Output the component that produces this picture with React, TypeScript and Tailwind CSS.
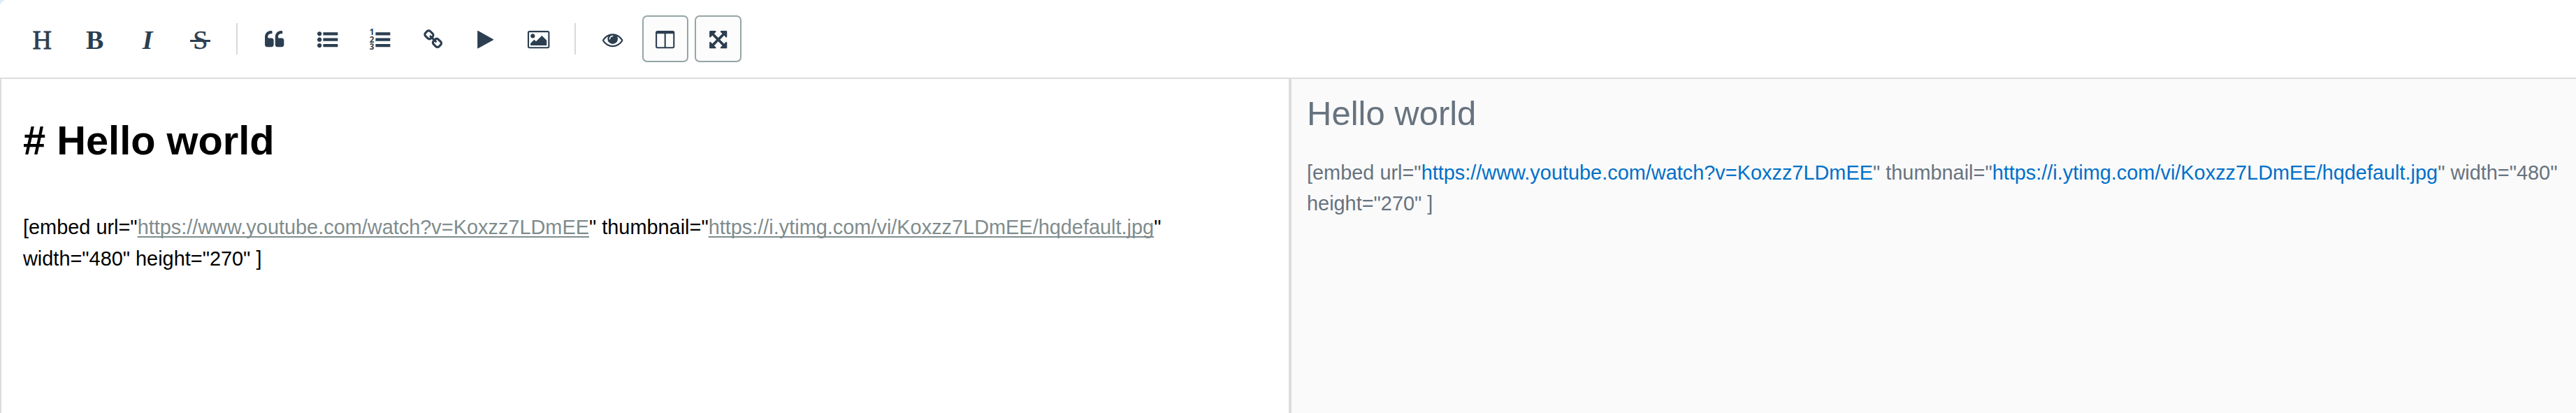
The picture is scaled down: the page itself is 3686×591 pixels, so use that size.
import type { ReactNode } from "react";

const paths = {
    quote: "M832 960v384q0 80-56 136t-136 56h-384q-80 0-136-56t-56-136v-704q0-104 40.5-198.5t109.5-163.5 163.5-109.5 198.5-40.5h64q26 0 45 19t19 45v128q0 26-19 45t-45 19h-64q-106 0-181 75t-75 181v32q0 40 28 68t68 28h224q80 0 136 56t56 136zm896 0v384q0 80-56 136t-136 56h-384q-80 0-136-56t-56-136v-704q0-104 40.5-198.5t109.5-163.5 163.5-109.5 198.5-40.5h64q26 0 45 19t19 45v128q0 26-19 45t-45 19h-64q-106 0-181 75t-75 181v32q0 40 28 68t68 28h224q80 0 136 56t56 136z",
    list: "M384 1408q0 80-56 136t-136 56-136-56-56-136 56-136 136-56 136 56 56 136zm0-512q0 80-56 136t-136 56-136-56-56-136 56-136 136-56 136 56 56 136zm1408 416v192q0 13-9.5 22.5t-22.5 9.5h-1216q-13 0-22.5-9.5t-9.5-22.5v-192q0-13 9.5-22.5t22.5-9.5h1216q13 0 22.5 9.5t9.5 22.5zm-1408-928q0 80-56 136t-136 56-136-56-56-136 56-136 136-56 136 56 56 136zm1408 416v192q0 13-9.5 22.5t-22.5 9.5h-1216q-13 0-22.5-9.5t-9.5-22.5v-192q0-13 9.5-22.5t22.5-9.5h1216q13 0 22.5 9.5t9.5 22.5zm0-512v192q0 13-9.5 22.5t-22.5 9.5h-1216q-13 0-22.5-9.5t-9.5-22.5v-192q0-13 9.5-22.5t22.5-9.5h1216q13 0 22.5 9.5t9.5 22.5z",
    link: "M1520 1216q0-40-28-68l-208-208q-28-28-68-28-42 0-72 32 3 3 19 18.5t21.5 21.5 15 19 13 25.5 3.5 27.5q0 40-28 68t-68 28q-15 0-27.5-3.5t-25.5-13-19-15-21.5-21.5-18.5-19q-33 31-33 73 0 40 28 68l206 207q27 27 68 27 40 0 68-26l147-146q28-28 28-67zm-703-705q0-40-28-68l-206-207q-28-28-68-28-39 0-68 27l-147 146q-28 28-28 67 0 40 28 68l208 208q27 27 68 27 42 0 72-31-3-3-19-18.5t-21.5-21.5-15-19-13-25.5-3.5-27.5q0-40 28-68t68-28q15 0 27.5 3.5t25.5 13 19 15 21.5 21.5 18.5 19q33-31 33-73zm895 705q0 120-85 203l-147 146q-83 83-203 83-121 0-204-85l-206-207q-83-83-83-203 0-123 88-209l-88-88q-86 88-208 88-120 0-204-84l-208-208q-84-84-84-204t85-203l147-146q83-83 203-83 121 0 204 85l206 207q83 83 83 203 0 123-88 209l88 88q86-88 208-88 120 0 204 84l208 208q84 84 84 204z",
    play: "M1576 927l-1328 738q-23 13-39.5 3t-16.5-36v-1472q0-26 16.5-36t39.5 3l1328 738q23 13 23 31t-23 31z",
    image: "M576 576q0 80-56 136t-136 56-136-56-56-136 56-136 136-56 136 56 56 136zm1024 384v448h-1408v-192l320-320 160 160 512-512zm96-704h-1600q-13 0-22.5 9.5t-9.5 22.5v1216q0 13 9.5 22.5t22.5 9.5h1600q13 0 22.5-9.5t9.5-22.5v-1216q0-13-9.5-22.5t-22.5-9.5zm160 32v1216q0 66-47 113t-113 47h-1600q-66 0-113-47t-47-113v-1216q0-66 47-113t113-47h1600q66 0 113 47t47 113z",
    eye: "M1664 960q-152-236-381-353 61 104 61 225 0 185-131.5 316.5t-316.5 131.5-316.5-131.5-131.5-316.5q0-121 61-225-229 117-381 353 133 205 333.5 326.5t434.5 121.5 434.5-121.5 333.5-326.5zm-720-384q0-20-14-34t-34-14q-125 0-214.5 89.5t-89.5 214.5q0 20 14 34t34 14 34-14 14-34q0-86 61-147t147-61q20 0 34-14t14-34zm848 384q0 34-20 69-140 230-376.5 368.5t-499.5 138.5-499.5-139-376.5-368q-20-35-20-69t20-69q140-229 376.5-368t499.5-139 499.5 139 376.5 368q20 35 20 69z",
    columns: "M224 1536h608v-1152h-640v1120q0 13 9.5 22.5t22.5 9.5zm1376-32v-1120h-640v1152h608q13 0 22.5-9.5t9.5-22.5zm128-1216v1216q0 66-47 113t-113 47h-1344q-66 0-113-47t-47-113v-1216q0-66 47-113t113-47h1344q66 0 113 47t47 113z",
    expand: "M1411 541l-355 355 355 355 144-144q29-31 70-14 39 17 39 59v448q0 26-19 45t-45 19h-448q-42 0-59-40-17-39 14-69l144-144-355-355-355 355 144 144q31 30 14 69-17 40-59 40h-448q-26 0-45-19t-19-45v-448q0-42 40-59 39-17 69 14l144 144 355-355-355-355-144 144q-19 19-45 19-12 0-24-5-40-17-40-59v-448q0-26 19-45t45-19h448q42 0 59 40 17 39-14 69l-144 144 355 355 355-355-144-144q-31-30-14-69 17-40 59-40h448q26 0 45 19t19 45v448q0 42-39 59-13 5-25 5-26 0-45-19z",
};

function Icon({ name }: { name: keyof typeof paths }) {
    return (
        <svg
            viewBox="0 0 1792 1792"
            className="mt-1 size-[29.4px] overflow-visible fill-current"
        >
            <path d={paths[name]} />
        </svg>
    );
}

function OrderedListIcon() {
    return (
        <svg
            viewBox="0 0 28 28"
            className="mt-1 size-[29.4px] overflow-visible fill-current"
        >
            <path d="M8 4h20v4H8zM8 12h20v4H8zM8 20h20v4H8z" />
            <g className="font-['Noto_Sans',sans-serif] text-[11px] font-bold">
                <text x="-0.3" y="8">1</text>
                <text x="-0.3" y="18">2</text>
                <text x="-0.3" y="27.8">3</text>
            </g>
        </svg>
    );
}

function ToolButton({
    label,
    active = false,
    children,
}: {
    label: string;
    active?: boolean;
    children: ReactNode;
}) {
    return (
        <button
            aria-label={label}
            className={`flex h-[67px] w-[66.5px] shrink-0 items-center justify-center rounded-[7px] border-2 ${
                active
                    ? "border-[#95a5a6] bg-[#fcfcfc]"
                    : "border-transparent"
            }`}
        >
            {children}
        </button>
    );
}

function Separator() {
    return (
        <i className="mr-[10.6px] ml-[9px] h-[45px] w-[2px] shrink-0 bg-[#d9d9d9]" />
    );
}

const VIDEO_URL = "https://www.youtube.com/watch?v=Koxzz7LDmEE";
const THUMB_URL = "https://i.ytimg.com/vi/Koxzz7LDmEE/hqdefault.jpg";

export default function App() {
    return (
        <div className="flex h-[591px] w-[3686px] flex-col overflow-hidden bg-white font-['Liberation_Sans',Arial,sans-serif] text-[28.9px]">
            {/* Toolbar */}
            <div className="h-[111px] shrink-0 bg-[#dcebf5]">
                <div className="flex h-full items-center gap-[9px] rounded-tl-[9px] bg-white pb-px pl-[27px] text-[#2c3e50]">
                    <ToolButton label="Heading">
                        <span className="mt-[4px] font-['Liberation_Serif',serif] text-[38px] leading-none [-webkit-text-stroke:0.8px_#2c3e50]">
                            H
                        </span>
                    </ToolButton>
                    <ToolButton label="Bold">
                        <span className="mt-[4px] font-['Liberation_Serif',serif] text-[38px] leading-none font-bold">
                            B
                        </span>
                    </ToolButton>
                    <ToolButton label="Italic">
                        <span className="mt-[4px] font-['Liberation_Serif',serif] text-[38px] leading-none font-bold italic">
                            I
                        </span>
                    </ToolButton>
                    <ToolButton label="Strikethrough">
                        <span className="relative mt-[4px] font-['Liberation_Serif',serif] text-[38px] leading-none [-webkit-text-stroke:0.5px_#2c3e50]">
                            S
                            <span className="absolute top-[19px] -left-[4px] h-[2.5px] w-[29px] bg-[#2c3e50]" />
                        </span>
                    </ToolButton>
                    <Separator />
                    <ToolButton label="Quote">
                        <Icon name="quote" />
                    </ToolButton>
                    <ToolButton label="Bulleted list">
                        <Icon name="list" />
                    </ToolButton>
                    <ToolButton label="Numbered list">
                        <OrderedListIcon />
                    </ToolButton>
                    <ToolButton label="Link">
                        <Icon name="link" />
                    </ToolButton>
                    <ToolButton label="Embed video">
                        <Icon name="play" />
                    </ToolButton>
                    <ToolButton label="Image">
                        <Icon name="image" />
                    </ToolButton>
                    <Separator />
                    <ToolButton label="Preview">
                        <Icon name="eye" />
                    </ToolButton>
                    <ToolButton label="Side by side" active>
                        <Icon name="columns" />
                    </ToolButton>
                    <ToolButton label="Fullscreen" active>
                        <Icon name="expand" />
                    </ToolButton>
                </div>
            </div>

            {/* Editor and preview */}
            <div className="flex flex-1 border-t-2 border-[#ddd]">
                <div className="w-[1846px] shrink-0 border-x-2 border-[#ddd] pt-[55px] pl-[31px] leading-[45px] text-black">
                    <h1 className="text-[57.8px] leading-[66px] font-bold">
                        # Hello world
                    </h1>
                    <p className="mt-[69px] w-[1700px]">
                        [embed url="
                        <span className="text-[#7f8c8d] underline decoration-2 underline-offset-[3px] [text-decoration-skip-ink:none]">
                            {VIDEO_URL}
                        </span>
                        " thumbnail="
                        <span className="text-[#7f8c8d] underline decoration-2 underline-offset-[3px] [text-decoration-skip-ink:none]">
                            {THUMB_URL}
                        </span>
                        " width="480" height="270" ]
                    </p>
                </div>
                <div className="flex-1 border-l-2 border-[#ddd] bg-[#fafafa] pt-[19px] pl-[22px] leading-[44px] text-[#67737f]">
                    <h1 className="text-[49px] leading-[60px]">Hello world</h1>
                    <p className="mt-[33px] w-[1800px]">
                        [embed url="
                        <a className="text-[#0070c9]">{VIDEO_URL}</a>
                        " thumbnail="
                        <a className="text-[#0070c9]">{THUMB_URL}</a>
                        " width="480" height="270" ]
                    </p>
                </div>
            </div>
        </div>
    );
}
